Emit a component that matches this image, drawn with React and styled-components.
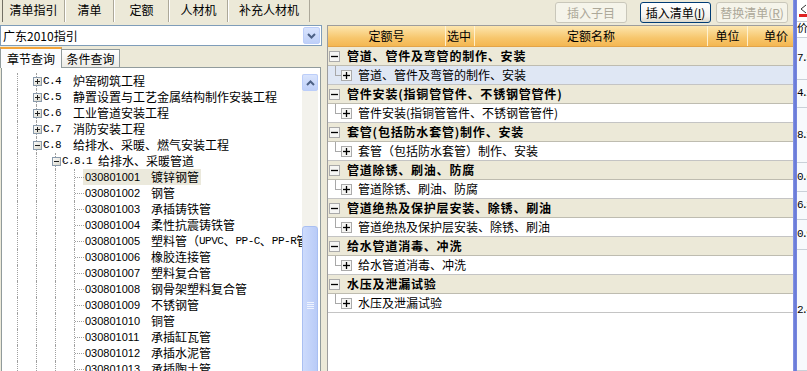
import React from 'react';
import styled, { createGlobalStyle } from 'styled-components';

const CJK = `"Noto Sans CJK SC", "Liberation Sans", sans-serif`;
const MONO = `"Liberation Mono", "Noto Sans CJK SC", monospace`;

const GlobalStyle = createGlobalStyle`
  html, body { margin: 0; padding: 0; }
  body {
    background: #ece9d8;
    font-family: ${CJK};
    font-size: 12px;
    color: #000;
  }
`;

const Window = styled.div`
  width: 807px;
  height: 371px;
  display: flex;
  overflow: hidden;
  background: #ece9d8;
`;

/* ---------- left side ---------- */

const LeftPane = styled.div`
  width: 323px;
  flex: none;
  display: flex;
  flex-direction: column;
`;

const TopTabs = styled.div`
  display: flex;
  height: 22px;
  padding-left: 2px;
`;

const TopTab = styled.div`
  width: ${p => p.$w}px;
  height: 22px;
  box-sizing: border-box;
  display: flex;
  align-items: center;
  justify-content: center;
  padding-bottom: 2px;
  border-left: 1px solid ${p => (p.$active ? '#716f64' : '#fff')};
  border-right: 1px solid #aca899;
  line-height: 1;
`;

const Combo = styled.div`
  margin-top: 3px;
  width: 322px;
  height: 21px;
  box-sizing: border-box;
  border: 1px solid #7f9db9;
  background: #fff;
  display: flex;
  align-items: center;
  padding-left: 2px;
  line-height: 1;
`;

const XpArrowButton = styled.div`
  width: ${p => p.$w || 16}px;
  height: ${p => p.$h || 17}px;
  box-sizing: border-box;
  border: 1px solid #bccefa;
  border-radius: 2px;
  background: linear-gradient(#d9e4fd, #bfd0f8);
  display: flex;
  align-items: center;
  justify-content: center;
  flex: none;
`;

const ComboButton = styled(XpArrowButton)`
  margin-left: auto;
  margin-right: 1px;
`;

const SubTabs = styled.div`
  display: flex;
  align-items: flex-end;
  height: 21px;
`;

const SubTab = styled.div`
  height: ${p => (p.$active ? 21 : 18)}px;
  width: ${p => (p.$active ? 62 : 58)}px;
  box-sizing: border-box;
  border: 1px solid #919b9c;
  border-bottom: none;
  border-left: ${p => (p.$active ? '1px solid #919b9c' : 'none')};
  border-top: ${p => (p.$active ? '2px solid #f3a43a' : '1px solid #919b9c')};
  background: ${p => (p.$active ? '#fcfcfe' : 'linear-gradient(#fff, #ecebe6)')};
  display: flex;
  align-items: center;
  justify-content: center;
  line-height: 1;
  position: relative;
  z-index: 1;
  margin-bottom: ${p => (p.$active ? -1 : 0)}px;
`;

const TreeBox = styled.div`
  flex: 1;
  min-height: 0;
  width: 320px;
  margin-left: 1px;
  margin-bottom: -4px;
  box-sizing: border-box;
  border: 1px solid #919b9c;
  background: #fff;
  display: flex;
  overflow: hidden;
`;

const TreeBody = styled.div`
  flex: 1;
  min-width: 0;
  padding: 5px 0 0 6px;
  overflow: hidden;
  white-space: nowrap;
`;

const TreeRow = styled.div`
  height: 16px;
  display: flex;
  align-items: center;
`;

const Guide = styled.div`
  width: 19px;
  height: 16px;
  flex: none;
  position: relative;
  &::before {
    content: '';
    position: absolute;
    left: 9px;
    top: 0;
    bottom: 0;
    border-left: 1px dotted #a0a0a0;
  }
`;

const NodeCell = styled(Guide)`
  display: flex;
  align-items: center;
  justify-content: center;
  &::after {
    content: '';
    position: absolute;
    left: 10px;
    right: 0;
    top: 8px;
    border-top: 1px dotted #a0a0a0;
  }
  svg {
    position: relative;
    z-index: 1;
    margin-left: 1px;
  }
`;

const TreeLabel = styled.div`
  margin-left: ${p => (p.$leaf ? -1 : -5)}px;
  padding: 0 2px;
  height: 16px;
  line-height: 16px;
  display: flex;
  align-items: center;
  background: ${p => (p.$selected ? '#ebe9dc' : 'transparent')};
`;

const ChapterCode = styled.span`
  font-family: ${MONO};
  font-size: 11px;
  letter-spacing: -0.6px;
  white-space: pre;
`;

const ItemCode = styled.span`
  display: inline-block;
  width: 66px;
  font-family: "Liberation Sans", sans-serif;
  font-size: 11px;
`;

const Mono = styled.span`
  font-family: ${MONO};
  font-size: 11px;
  letter-spacing: -0.5px;
`;

const Scrollbar = styled.div`
  width: 16px;
  flex: none;
  margin: 6px 2px 0 0;
  display: flex;
  flex-direction: column;
  background: #f3f2ec;
`;

const ScrollTrack = styled.div`
  flex: 1;
  padding-top: 135px;
  display: flex;
  flex-direction: column;
`;

const Thumb = styled.div`
  flex: 1;
  box-sizing: border-box;
  border: 1px solid #a9bff2;
  border-radius: 3px;
  background: linear-gradient(to right, #cddbfc, #b9cbf7);
  display: flex;
  justify-content: center;
  padding-top: 75px;
`;

const Splitter = styled.div`
  width: 4px;
  flex: none;
`;

/* ---------- right side ---------- */

const RightPane = styled.div`
  width: 466px;
  flex: none;
  display: flex;
  flex-direction: column;
`;

const Toolbar = styled.div`
  height: 25px;
  flex: none;
  display: flex;
  justify-content: flex-end;
  align-items: flex-start;
  padding: 2px 5px 0 0;
  box-sizing: border-box;
`;

const ToolButton = styled.button`
  width: ${p => p.$w}px;
  height: 21px;
  margin-right: ${p => p.$mr || 0}px;
  padding: 0;
  font: 12px ${CJK};
  line-height: 1;
  border-radius: 3px;
  border: 1px solid ${p => (p.disabled ? '#c9c7ba' : '#003c74')};
  background: ${p => (p.disabled ? '#f5f4ea' : 'linear-gradient(#ffffff, #f4f3ee 70%, #dcd8cc)')};
  color: ${p => (p.disabled ? '#aca899' : '#000')};
  u { text-decoration: underline; }
`;

const Grid = styled.div`
  flex: 1;
  min-height: 0;
  background: #fff;
  border-left: 1px solid #9d9d9d;
  border-top: 1px solid #9d9d9d;
  display: flex;
  flex-direction: column;
  overflow: hidden;
`;

const HeaderRow = styled.div`
  height: 20px;
  flex: none;
  display: flex;
  background: linear-gradient(#fde6ae, #f7c66c 60%, #f4b752);
  border-bottom: 1px solid #e3a448;
`;

const HeaderCell = styled.div`
  width: ${p => p.$w}px;
  flex: none;
  box-sizing: border-box;
  display: flex;
  align-items: center;
  justify-content: ${p => p.$align || 'center'};
  padding: 0 ${p => (p.$align === 'flex-end' ? 5 : 1)}px;
  border-right: 1px solid rgba(255, 244, 214, 0.9);
  line-height: 1;
  &:last-child { border-right: none; }
`;

const GroupRow = styled.div`
  height: 19px;
  flex: none;
  box-sizing: border-box;
  display: flex;
  align-items: center;
  padding-left: 1px;
  background: #ece9d8;
  border-bottom: 1px solid #bebcb0;
`;

const GroupTitle = styled.span`
  margin-left: 7px;
  font-weight: bold;
  letter-spacing: 0.8px;
  line-height: 1;
`;

const ChildRow = styled.div`
  height: 19px;
  flex: none;
  box-sizing: border-box;
  display: flex;
  align-items: center;
  background: ${p => (p.$selected ? '#dfe7f4' : '#fff')};
  border-bottom: 1px solid #c4c4c4;
`;

const Connector = styled.div`
  width: 13px;
  height: 100%;
  flex: none;
  position: relative;
  &::before {
    content: '';
    position: absolute;
    left: 7px;
    top: 0;
    height: 9px;
    border-left: 1px solid #a8a8a8;
  }
  &::after {
    content: '';
    position: absolute;
    left: 7px;
    right: 0;
    top: 9px;
    border-top: 1px solid #a8a8a8;
  }
`;

const ChildTitle = styled.span`
  margin-left: 6px;
  line-height: 1;
`;

const BlueBar = styled.div`
  width: 4px;
  flex: none;
  background: linear-gradient(to right, #8b9ae6, #6476d6 50%, #7b8be0);
`;

const Strip = styled.div`
  flex: 1;
  min-width: 0;
  background: #f7f9fc;
  display: flex;
  flex-direction: column;
  overflow: hidden;
`;

const StripCell = styled.div`
  height: ${p => p.$h}px;
  flex: none;
  box-sizing: border-box;
  border-bottom: 1px solid #c9d0d8;
  display: flex;
  align-items: center;
  padding-left: 0;
  font-family: ${MONO};
  font-size: 11px;
  letter-spacing: -2px;
  line-height: 1;
  white-space: nowrap;
  background: ${p => (p.$top ? '#fff' : 'transparent')};
`;

/* ---------- icons ---------- */

const TreeSign = ({ open }) => (
  <svg width="9" height="9" viewBox="0 0 9 9">
    <defs>
      <linearGradient id="tsg" x1="0" y1="0" x2="1" y2="1">
        <stop offset="0" stopColor="#ffffff" />
        <stop offset="1" stopColor="#d5d3c6" />
      </linearGradient>
    </defs>
    <rect x="0.5" y="0.5" width="8" height="8" fill="url(#tsg)" stroke="#8a9aab" />
    <line x1="2" y1="4.5" x2="7" y2="4.5" stroke="#1e1e1e" />
    {!open && <line x1="4.5" y1="2" x2="4.5" y2="7" stroke="#1e1e1e" />}
  </svg>
);

const GridSign = ({ open }) => (
  <svg width="11" height="11" viewBox="0 0 11 11" style={{ flex: 'none' }}>
    <rect x="0.5" y="0.5" width="10" height="10" fill="#f6f6f4" stroke="#aaaaaa" />
    <line x1="2" y1="5.5" x2="9" y2="5.5" stroke="#000" strokeWidth="1.3" />
    {!open && <line x1="5.5" y1="2" x2="5.5" y2="9" stroke="#000" strokeWidth="1.3" />}
  </svg>
);

const Chevron = ({ up }) => (
  <svg width="9" height="6" viewBox="0 0 9 6">
    <polyline
      points={up ? '1,5 4.5,1.5 8,5' : '1,1 4.5,4.5 8,1'}
      fill="none"
      stroke="#4d6185"
      strokeWidth="2"
    />
  </svg>
);

const Grip = () => (
  <svg width="7" height="8" viewBox="0 0 7 8">
    {[0.5, 2.5, 4.5, 6.5].map(y => (
      <line key={y} x1="0" y1={y} x2="7" y2={y} stroke="#eef3fe" />
    ))}
  </svg>
);

const CornerIcon = () => (
  <svg width="10" height="14" viewBox="0 0 10 14">
    <polyline points="9,1 4,5 9,9" fill="none" stroke="#333" strokeWidth="1" />
    <rect x="2" y="10" width="8" height="3" fill="#e02020" />
  </svg>
);

/* ---------- data ---------- */

const chapters = [
  { code: 'C.4  ', name: '炉窑砌筑工程' },
  { code: 'C.5  ', name: '静置设置与工艺金属结构制作安装工程' },
  { code: 'C.6  ', name: '工业管道安装工程' },
  { code: 'C.7  ', name: '消防安装工程' },
];

const items = [
  ['030801001', '镀锌钢管'],
  ['030801002', '钢管'],
  ['030801003', '承插铸铁管'],
  ['030801004', '柔性抗震铸铁管'],
  ['030801005', null],
  ['030801006', '橡胶连接管'],
  ['030801007', '塑料复合管'],
  ['030801008', '钢骨架塑料复合管'],
  ['030801009', '不锈钢管'],
  ['030801010', '铜管'],
  ['030801011', '承插缸瓦管'],
  ['030801012', '承插水泥管'],
  ['030801013', '承插陶土管'],
];

const groups = [
  ['管道、管件及弯管的制作、安装', '管道、管件及弯管的制作、安装'],
  ['管件安装(指铜管管件、不锈钢管管件)', '管件安装(指铜管管件、不锈钢管管件)'],
  ['套管(包括防水套管)制作、安装', '套管（包括防水套管）制作、安装'],
  ['管道除锈、刷油、防腐', '管道除锈、刷油、防腐'],
  ['管道绝热及保护层安装、除锈、刷油', '管道绝热及保护层安装、除锈、刷油'],
  ['给水管道消毒、冲洗', '给水管道消毒、冲洗'],
  ['水压及泄漏试验', '水压及泄漏试验'],
];

const columns = [
  { title: '定额号', w: 118 },
  { title: '选中', w: 29, align: 'flex-start' },
  { title: '定额名称', w: 233 },
  { title: '单位', w: 40 },
  { title: '单价', w: 45, align: 'flex-end' },
];

const strip = [
  { h: 22, text: '', top: true },
  { h: 16, text: '价', top: true },
  { h: 42, text: '7.5' },
  { h: 28, text: '4.2' },
  { h: 55, text: '8.1' },
  { h: 29, text: '0.6' },
  { h: 28, text: '6.3' },
  { h: 30, text: '0.9' },
  { h: 121, text: '2.4' },
];

const Guides = ({ n }) => Array.from({ length: n }, (_, i) => <Guide key={i} />);

const App = () => (
  <>
    <GlobalStyle />
    <Window>
      <LeftPane>
        <TopTabs>
          <TopTab $w={63} $active>清单指引</TopTab>
          <TopTab $w={49}>清单</TopTab>
          <TopTab $w={55}>定额</TopTab>
          <TopTab $w={59}>人材机</TopTab>
          <TopTab $w={82}>补充人材机</TopTab>
        </TopTabs>
        <Combo>
          广东2010指引
          <ComboButton $w={17} $h={17}>
            <Chevron />
          </ComboButton>
        </Combo>
        <SubTabs>
          <SubTab $active>章节查询</SubTab>
          <SubTab>条件查询</SubTab>
        </SubTabs>
        <TreeBox>
          <TreeBody>
            {chapters.map(c => (
              <TreeRow key={c.code}>
                <Guides n={1} />
                <NodeCell><TreeSign /></NodeCell>
                <TreeLabel>
                  <ChapterCode>{c.code}</ChapterCode>
                  {c.name}
                </TreeLabel>
              </TreeRow>
            ))}
            <TreeRow>
              <Guides n={1} />
              <NodeCell><TreeSign open /></NodeCell>
              <TreeLabel>
                <ChapterCode>{'C.8  '}</ChapterCode>
                给排水、采暖、燃气安装工程
              </TreeLabel>
            </TreeRow>
            <TreeRow>
              <Guides n={2} />
              <NodeCell><TreeSign open /></NodeCell>
              <TreeLabel>
                <ChapterCode>{'C.8.1 '}</ChapterCode>
                给排水、采暖管道
              </TreeLabel>
            </TreeRow>
            {items.map(([code, name], i) => (
              <TreeRow key={code}>
                <Guides n={3} />
                <NodeCell />
                <TreeLabel $leaf $selected={i === 0}>
                  <ItemCode>{code}</ItemCode>
                  {name || (
                    <>
                      塑料管（ <Mono>UPVC</Mono>、<Mono>PP-C</Mono>、<Mono>PP-R</Mono>管）
                    </>
                  )}
                </TreeLabel>
              </TreeRow>
            ))}
          </TreeBody>
          <Scrollbar>
            <XpArrowButton $h={17}>
              <Chevron up />
            </XpArrowButton>
            <ScrollTrack>
              <Thumb>
                <Grip />
              </Thumb>
            </ScrollTrack>
          </Scrollbar>
        </TreeBox>
      </LeftPane>

      <Splitter />

      <RightPane>
        <Toolbar>
          <ToolButton $w={72} $mr={13} disabled>插入子目</ToolButton>
          <ToolButton $w={71} $mr={5}>插入清单(<u>I</u>)</ToolButton>
          <ToolButton $w={72} disabled>替换清单(<u>R</u>)</ToolButton>
        </Toolbar>
        <Grid>
          <HeaderRow>
            {columns.map(c => (
              <HeaderCell key={c.title} $w={c.w} $align={c.align}>
                {c.title}
              </HeaderCell>
            ))}
          </HeaderRow>
          {groups.map(([title, child], i) => (
            <React.Fragment key={title}>
              <GroupRow>
                <GridSign open />
                <GroupTitle>{title}</GroupTitle>
              </GroupRow>
              <ChildRow $selected={i === 0}>
                <Connector />
                <GridSign />
                <ChildTitle>{child}</ChildTitle>
              </ChildRow>
            </React.Fragment>
          ))}
        </Grid>
      </RightPane>

      <BlueBar />

      <Strip>
        {strip.map((s, i) => (
          <StripCell key={i} $h={s.h} $top={s.top}>
            {i === 0 ? <CornerIcon /> : s.text}
          </StripCell>
        ))}
      </Strip>
    </Window>
  </>
);

export default App;
